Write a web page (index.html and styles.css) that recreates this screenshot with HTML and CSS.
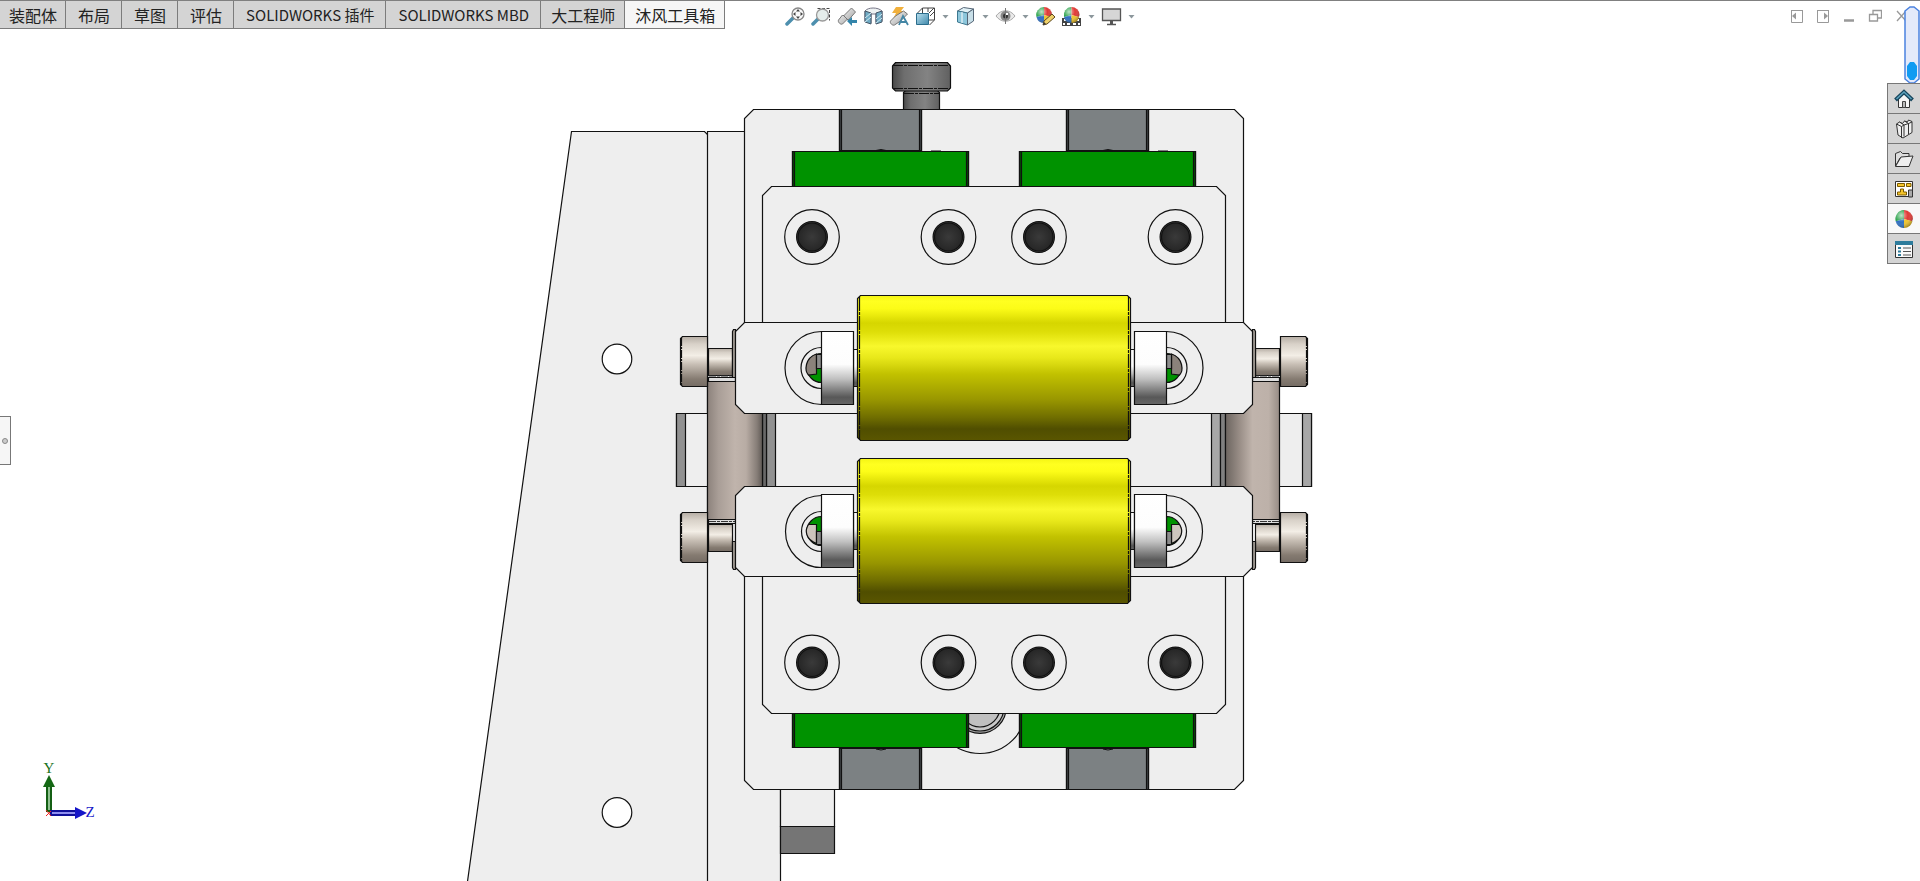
FILE: index.html
```html
<!DOCTYPE html>
<html lang="zh-CN">
<head>
<meta charset="utf-8">
<meta name="viewport" content="width=device-width, initial-scale=1">
<title>沐风工具箱</title>
<link rel="stylesheet" href="styles.css">
</head>
<body>
<main class="viewport">
<svg class="model" viewBox="0 0 1920 881" preserveAspectRatio="xMidYMin slice" role="img" aria-label="装配体">
  <defs>
    <linearGradient id="yellow" x1="0" y1="0" x2="0" y2="1">
      <stop offset="0" stop-color="#f4f414"/><stop offset=".04" stop-color="#ffff20"/><stop offset=".09" stop-color="#fcfc18"/><stop offset=".19" stop-color="#d6d600"/><stop offset=".25" stop-color="#dede08"/><stop offset=".35" stop-color="#f8f82c"/><stop offset=".43" stop-color="#e8e81a"/><stop offset=".54" stop-color="#c2c200"/><stop offset=".72" stop-color="#989600"/><stop offset=".84" stop-color="#706e00"/><stop offset=".92" stop-color="#504e00"/><stop offset="1" stop-color="#5a5600"/>
    </linearGradient>
    <linearGradient id="ring" x1="0" y1="0" x2="0" y2="1">
      <stop offset="0" stop-color="#fff"/><stop offset=".45" stop-color="#fdfdfd"/><stop offset=".65" stop-color="#c0c0c0"/><stop offset=".9" stop-color="#585858"/><stop offset="1" stop-color="#666"/>
    </linearGradient>
    <linearGradient id="steel" x1="0" y1="0" x2="0" y2="1">
      <stop offset="0" stop-color="#b5ada4"/><stop offset=".15" stop-color="#d8d1c8"/><stop offset=".38" stop-color="#f3eee6"/><stop offset=".55" stop-color="#c9c0b6"/><stop offset=".85" stop-color="#857b71"/><stop offset="1" stop-color="#756c64"/>
    </linearGradient>
    <linearGradient id="column">
      <stop offset="0" stop-color="#8c827c"/><stop offset=".2" stop-color="#a99e97"/><stop offset=".5" stop-color="#c0b4ac"/><stop offset=".7" stop-color="#b8aca4"/><stop offset=".9" stop-color="#867d77"/><stop offset="1" stop-color="#5f5955"/>
    </linearGradient>
    <linearGradient id="columnRight">
      <stop offset="0" stop-color="#6c6560"/><stop offset=".25" stop-color="#978c85"/><stop offset=".5" stop-color="#c0b4ac"/><stop offset=".8" stop-color="#bdb1a9"/><stop offset="1" stop-color="#978c85"/>
    </linearGradient>
    <linearGradient id="knob">
      <stop offset="0" stop-color="#4a4a4a"/><stop offset=".2" stop-color="#6e6e6e"/><stop offset=".6" stop-color="#838383"/><stop offset="1" stop-color="#606060"/>
    </linearGradient>
    <radialGradient id="bore"><stop offset="0" stop-color="#3a3a3a"/><stop offset="1" stop-color="#262626"/></radialGradient>
    <g id="hole">
      <circle r="27.3" fill="#eee"/><circle r="15.4" fill="#444"/><circle r="14" fill="url(#bore)"/>
    </g>
    <g id="railTop">
      <path fill="#7c8183" d="M839.5 109.5h82v41h-82z"/><path fill="#404446" d="M839.5 109.5h2v41h-2zM919.5 109.5h2v41h-2z"/>
    </g>
    <g id="block">
      <path fill="#009200" d="M792.5 151.5h176v35h-176z"/><path fill="#005000" d="M792.5 151.5h2v35h-2zM966.5 151.5h2v35h-2z"/>
    </g>
    <g id="screw">
      <path fill="url(#steel)" d="M682.5 336.5h25v50h-25l-2-2v-46z"/>
      <path fill="url(#steel)" d="M708.5 348.5h24v27h-24z"/>
      <path fill="none" stroke-dasharray="8 1 2 1" d="M681.5 338v47"/>
    </g>
    <g id="ringSet">
      <path fill="#eee" d="M853.5 331.5h5v73h-5z" stroke="none"/>
      <path fill="url(#ring)" d="M853.5 349.5h5v37h-5z"/>
      <path fill="url(#ring)" d="M821.5 331.5h32v73h-32z"/>
    </g>
    <g id="slotUpper">
      <path fill="#eee" d="M821.5 331.5a36.5 36.5 0 0 0 0 73"/>
      <path fill="#eee" d="M821.5 347.5a20.5 20.5 0 0 0 0 41"/>
      <path fill="#009200" d="M821.5 353.500a14.500 14.500 0 0 0 0 29z"/>
      <path fill="#8b827b" d="M816.500 354c-12 4-12 17-8 21l8-1z"/>
      <path fill="#8c8c8c" d="M816.500 354.500h5v14h-5z"/>
    </g>
    <g id="slotLower">
      <path fill="#eee" d="M821.5 495.5a36 36 0 0 0 0 72"/>
      <path fill="#eee" d="M821.5 511.500a20 20 0 0 0 0 40"/>
      <path fill="#009200" d="M821.500 516.500a14.500 14.500 0 0 0 0 29z"/>
      <path fill="#cdc5bd" d="M816.500 524.500h-8c-4 6-3 15 8 19z"/>
      <path fill="#8c8c8c" d="M816.500 531.500h5v13h-5z"/>
    </g>
    <g id="side">
      <use href="#screw"/><use href="#screw" y="176"/>
      <path fill="#ddd" d="M708.500 377.500h27v4h-27zM708.500 519.500h27v4h-27z"/>
      <path fill="none" stroke="#333" stroke-dasharray="7 1 3 1" d="M709 376h26M709 521.500h26"/>
      <path fill="#aaa39c" d="M732.500 331.500l1-2h2v48h-3zM732.500 541.500h3v28h-2l-1-2z"/>
    </g>
  </defs>
  <g fill="#eee" stroke="#111" stroke-width="1.200">
    <path d="M571.500 131.500h133l4 4v746h-241z"/>
    <path d="M707.500 131.500h73v750h-73z"/>
    <circle cx="617" cy="359" r="14.800" fill="#fff"/><circle cx="617" cy="812.500" r="14.800" fill="#fff"/>
    <path d="M780.500 780.500h54v46h-54z"/><path fill="#757575" d="M780.500 826.500h54v27h-54z"/>
    <path fill="url(#knob)" d="M903.500 92.500l2-2h32l2 2v17h-36z"/>
    <path fill="url(#knob)" d="M892.500 66l3-3.500h52l3 3.500v22l-3 3h-52l-3-3z"/>
    <path fill="none" stroke-dasharray="10 1 3 1" d="M893 65.500h57M893 88.500h57M904 93.500h35"/>
    <path d="M753.500 109.500h481l9 9v662l-9 9h-481l-9-9v-662z"/>
    <circle cx="980" cy="707" r="46.500"/><circle cx="980" cy="707" r="26.300" fill="#aaa"/><circle cx="980" cy="707" r="24" fill="#c8c8c8"/><circle cx="980" cy="707" r="20" fill="#c0c0c0"/>
    <use href="#railTop"/><use href="#railTop" x="227"/><use href="#railTop" y="639"/><use href="#railTop" x="227" y="639"/>
    <use href="#block"/><use href="#block" x="227"/><use href="#block" y="561"/><use href="#block" x="227" y="561"/>
    <path fill="none" d="M876 150.500l5-1 5 1M1103 150.500l5-1 5 1M931 151h10M1158 151h10M876 749l5 1 5-1M1103 749l5 1 5-1"/>
    <path d="M771.500 186.500h445l9 9v509l-9 9h-445l-9-9v-509z"/>
    <use href="#hole" x="812" y="237"/><use href="#hole" x="948.500" y="237"/><use href="#hole" x="1039" y="237"/><use href="#hole" x="1175.500" y="237"/>
    <use href="#hole" x="812" y="662.500"/><use href="#hole" x="948.500" y="662.500"/><use href="#hole" x="1039" y="662.500"/><use href="#hole" x="1175.500" y="662.500"/>
    <path d="M676.500 413.500h635v73h-635z"/>
    <path fill="#919191" d="M676.500 413.500h9v73h-9zM766.500 413.500h9v73h-9z"/><path fill="#696969" d="M762.500 413.500h4v73h-4z"/>
    <path fill="#a7a7a7" d="M1211.500 413.500h9v73h-9zM1302.500 413.500h9v73h-9z"/><path fill="#808080" d="M1220.500 413.500h5v73h-5z"/>
    <path fill="url(#column)" d="M707.500 381.500h55v138h-55z"/><path fill="url(#columnRight)" d="M1225.500 381.500h54v138h-54z"/>
    <use href="#side"/><use href="#side" transform="translate(1988 0) scale(-1 1)"/>
    <path d="M744.500 322.500h499l9 9v73l-9 9h-499l-9-9v-73z"/>
    <path d="M744.500 486.500h499l9 9v72l-9 9h-499l-9-9v-72z"/>
    <use href="#slotUpper"/><use href="#slotUpper" transform="translate(1988 0) scale(-1 1)"/>
    <use href="#slotLower"/><use href="#slotLower" transform="translate(1988 0) scale(-1 1)"/>
    <use href="#ringSet"/><use href="#ringSet" y="163"/>
    <g transform="translate(1988 0) scale(-1 1)"><use href="#ringSet"/><use href="#ringSet" y="163"/></g>
    <path fill="url(#yellow)" d="M860.500 295.500h267l3 3v139l-3 3h-267l-3-3v-139z"/>
    <path fill="url(#yellow)" d="M860.500 458.500h267l3 3v139l-3 3h-267l-3-3v-139z"/>
    <path fill="none" stroke-dasharray="14 1 3 1" d="M859.500 297v142M1128.500 297v142M859.500 460v142M1128.500 460v142"/>
  </g>
  <g class="axes">
    <path fill="#8fc08f" stroke="#145f14" stroke-width="2" d="M47 786h4v25h-4z"/><path fill="#146814" d="M49 775l6 12H43z"/>
    <path fill="#8f8ff0" stroke="#10109a" stroke-width="2" d="M51 811h25v4H51z"/><path fill="#1616c8" d="M87 813l-12 6v-12z"/>
    <text class="axis-y" x="49" y="773" text-anchor="middle">Y</text>
    <text class="axis-z" x="90" y="817" text-anchor="middle">Z</text>
    <path fill="none" stroke="#e22" d="M46 810l5 6M51 811l-5 5"/>
  </g>
</svg>
</main>

<svg class="symbols" aria-hidden="true">
  <defs>
    <linearGradient id="blue" x2="1" y2="1"><stop stop-color="#b9e0ef"/><stop offset="1" stop-color="#3f88aa"/></linearGradient>
    <linearGradient id="silver" x2="1" y2="1"><stop stop-color="#fff"/><stop offset="1" stop-color="#999"/></linearGradient>
    <radialGradient id="shine" cx=".35" cy=".3" r=".75"><stop stop-color="#fff" stop-opacity=".7"/><stop offset=".5" stop-color="#fff" stop-opacity="0"/><stop offset="1" stop-color="#000" stop-opacity=".35"/></radialGradient>
    <g id="ball">
      <path fill="#2ba34b" d="M9 9V1a8 8 0 0 0-7.500 10z"/><path fill="#e03a35" d="M9 9V1a8 8 0 0 1 8 8l-1 2z"/><path fill="#2f6fc0" d="M1.500 11L9 9v8a8 8 0 0 1-7.500-6z"/><path fill="#f0c42c" d="M9 9l7.500 2A8 8 0 0 1 9 17z"/><circle cx="9" cy="9" r="8" fill="url(#shine)"/>
    </g>
  </defs>
</svg>

<header class="topbar">
  <nav class="tabs">
    <button class="tab tab-edge">装配体</button><button class="tab">布局</button><button class="tab">草图</button><button class="tab">评估</button><button class="tab tab-latin">SOLIDWORKS 插件</button><button class="tab tab-latin">SOLIDWORKS MBD</button><button class="tab tab-snug">大工程师</button><button class="tab tab-snug active">沐风工具箱</button>
  </nav>
  <div class="tools">
    <button class="tool" aria-label="整屏显示全图"><svg viewBox="0 0 21 21"><path d="M2 18l6-6" stroke="#4d8fae" stroke-width="3.500" stroke-linecap="round"/><circle cx="13" cy="8" r="6" fill="#fafafa" stroke="#888" stroke-width="1.300"/><path fill="#444" d="M13 3l2 2.500h-4zM13 13l2-2.500h-4zM8 8l2.500-2v4zM18 8l-2.500-2v4z"/></svg></button>
    <button class="tool" aria-label="局部放大"><svg viewBox="0 0 21 21"><path d="M6.500 2.500h12v12" fill="none" stroke="#444" stroke-dasharray="3 1.500"/><path d="M2 18l5-5" stroke="#4d8fae" stroke-width="3.500" stroke-linecap="round"/><circle cx="11.500" cy="9" r="6" fill="#e5edeb" stroke="#999" stroke-width="1.300"/></svg></button>
    <button class="tool" aria-label="上一视图"><svg viewBox="0 0 21 21"><path fill="url(#silver)" stroke="#777" d="M1.500 14l4-5 1 1 8-8 4 4-7 8-1-1-5 5c-2 1-5-2-4-4z"/><path d="M6 9l5 5" stroke="#777"/><path fill="#3385aa" d="M10 15l5-4v3h5v3h-5v3z"/></svg></button>
    <button class="tool" aria-label="剖面视图"><svg viewBox="0 0 21 21"><path fill="#eef2f3" stroke="#778" d="M2 5c3-4 13-4 17 0v10l-6 1V8H8v9l-6-2z"/><path fill="#6fabc4" stroke="#456" d="M2 5l6 2v11l-6-2zM13 7l6-2v11l-6 2z"/><path d="M2 12l6-5M2 16l6-5M13 13l6-5M13 17l6-5" stroke="#d3eaf3"/></svg></button>
    <button class="tool" aria-label="动态注解视图"><svg viewBox="0 0 21 21"><path fill="#f1b03c" d="M7 1h8l-3 4h4L4 13l3-6H3z"/><path fill="url(#silver)" stroke="#777" d="M1.500 15l5-5 8-5 4 3-7 7-6 4c-2 1-5-2-4-4z"/><path fill="none" stroke="#4386a5" stroke-width="1.800" d="M10 19l4-9 5 9M12 16h5"/></svg></button>
    <button class="tool" aria-label="视图定向"><svg viewBox="0 0 21 21"><path fill="none" stroke="#444" d="M2.500 7l5-5h12v12l-5 5M7.500 2v5M14 7l5-5M14 14h5M13 2v4M15 10l4-4"/><path fill="url(#blue)" stroke="#2b6d8c" d="M1.500 7.500h12v11h-12z"/></svg></button>
    <button class="caret" aria-label="视图定向选项"><svg viewBox="0 0 9 6"><path d="M1.500 1h6l-3 3.500z"/></svg></button>
    <button class="tool" aria-label="显示样式"><svg viewBox="0 0 21 21"><path fill="#e1f1f6" stroke="#567" d="M2.500 5l6-3.500 10 1.500-6 4z"/><path fill="#8dc7dc" stroke="#3c7890" d="M2.500 5l10 2v12l-10-3z"/><path fill="#c8dfe8" stroke="#567" d="M12.500 7l6-4v12l-6 4z"/><path stroke="#fff" d="M7 6v11"/></svg></button>
    <button class="caret" aria-label="显示样式选项"><svg viewBox="0 0 9 6"><path d="M1.500 1h6l-3 3.500z"/></svg></button>
    <button class="tool" aria-label="隐藏或显示项目"><svg viewBox="0 0 21 21"><path fill="#e9e9e9" stroke="#aaa" d="M1 10c5-7 14-7 19 0-5 7-14 7-19 0z"/><circle cx="10.500" cy="10" r="5" fill="#888"/><circle cx="10.500" cy="10" r="2.500" fill="#333"/><path d="M10.500 2v16" stroke="#777"/><path fill="#fff" d="M11 7h2v2h-2z"/></svg></button>
    <button class="caret" aria-label="隐藏选项"><svg viewBox="0 0 9 6"><path d="M1.500 1h6l-3 3.500z"/></svg></button>
    <button class="tool" aria-label="编辑外观"><svg viewBox="0 0 21 21"><use href="#ball"/><path fill="#f0d26a" stroke="#5d4820" d="M8 19l1-4 8-7 3 3-8 7z"/><path fill="#333" d="M8 19l1-3 2 2z"/></svg></button>
    <button class="tool" aria-label="应用布景"><svg viewBox="0 0 21 21"><path fill="#444" d="M1 12h19v8H1z"/><path fill="#fff" d="M3 13h3v2H3zM15 13h3v2h-3zM6 17h3v2H6zM12 17h3v2h-3zM2 17h2v2H2zM17 17h2v2h-2z"/><use href="#ball" x="1.500"/></svg></button>
    <button class="caret" aria-label="布景选项"><svg viewBox="0 0 9 6"><path d="M1.500 1h6l-3 3.500z"/></svg></button>
    <button class="tool" aria-label="视图设定"><svg viewBox="0 0 21 21"><path fill="#d6d6d6" stroke="#555" stroke-width="1.300" d="M1.500 3h18v11.500h-18z"/><path d="M10.500 15v3" stroke="#555" stroke-width="3"/><path d="M6 18.500h9" stroke="#555" stroke-width="1.500"/></svg></button>
    <button class="caret" aria-label="视图设定选项"><svg viewBox="0 0 9 6"><path d="M1.500 1h6l-3 3.500z"/></svg></button>
  </div>
  <div class="window-controls">
    <button class="win" aria-label="向左停靠"><svg viewBox="0 0 14 14"><path d="M1.500 1v12.500h11V1M1.500 1.500h11"/><path fill="#999" stroke="none" d="M6 3.500v7L2 7z"/></svg></button>
    <button class="win" aria-label="向右停靠"><svg viewBox="0 0 14 14"><path d="M1.500 1v12.500h11V1M1.500 1.500h11"/><path fill="#999" stroke="none" d="M8 3.500v7l4-3.500z"/></svg></button>
    <button class="win" aria-label="最小化"><svg viewBox="0 0 14 14"><path d="M2 11.500h10" stroke-width="2.500"/></svg></button>
    <button class="win" aria-label="还原"><svg viewBox="0 0 14 14"><path d="M5 5V1.500h8.500V9H9.500M1.500 5.500h8V12h-8z" stroke-width="1.300"/></svg></button>
    <button class="win" aria-label="关闭"><svg viewBox="0 0 14 14"><path d="M3 2l9 10M12 2L3 12" stroke-width="1.300"/></svg></button>
  </div>
</header>

<button class="flyout" aria-label="展开面板"><span class="flyout-dot"></span></button>

<aside class="side">
  <div class="gauge"><svg viewBox="0 0 16 78"><path fill="#e4eafa" stroke="#4b82df" stroke-width="1.500" d="M1 5l5-4h4l5 4v68l-5 4H6l-5-4z"/><path fill="#109bf2" d="M3 60l3-4h4l3 4v10l-3 4H6l-3-4z"/></svg></div>
  <nav class="panes">
    <button class="pane" aria-label="资源"><svg viewBox="0 0 20 20"><path fill="#f7f7f7" stroke="#333" d="M4.500 9v9.500h11V9L10 4z"/><path fill="#bbb" stroke="#444" d="M8.500 12.500h3v6h-3z"/><path fill="none" stroke="#18465d" stroke-width="4" d="M1.500 11L10 3l8.500 8"/><path fill="none" stroke="#5ba2bd" stroke-width="1.500" d="M2.500 10L10 3l7.500 7"/></svg></button>
    <button class="pane" aria-label="设计库"><svg viewBox="0 0 20 20"><path fill="#eee" stroke="#333" d="M2.500 5l3-2 3 1.500 2-2.500 3 1 1-2 3.500 1.500v11l-9 5.500-5-3zM2.500 5l5 2.500V19M5.500 3l4.500 3v11.500M10 6l-2.500 1.500M10.500 2l4 2.500v10.500M14.500 4.500L10 6M18 3l-3.500 1.500"/></svg></button>
    <button class="pane" aria-label="文件探索器"><svg viewBox="0 0 20 20"><path fill="#ddd" stroke="#333" d="M1.500 17V4.500l5-2 2 2H15V8l-9 1z"/><path fill="#eee" stroke="#333" d="M1.500 17.500L7 8l12-1-4 10.500z"/></svg></button>
    <button class="pane" aria-label="视图调色板"><svg viewBox="0 0 20 20"><path fill="#fff" stroke="#333" d="M1.500 2.500h17v15h-17z"/><path fill="#f5c52b" stroke="#7b5b00" d="M3.500 4.500h7v3h-7zM12.500 4.500H17v3h-4.500zM3.500 13h3v-3h3v3h3v3h-9z"/><path fill="#aaa" stroke="#333" d="M14.500 11h4v7h-4z"/></svg></button>
    <button class="pane active" aria-label="外观"><svg viewBox="0 0 18 18"><use href="#ball"/></svg></button>
    <button class="pane" aria-label="自定义属性"><svg viewBox="0 0 20 20"><path fill="#fafafa" stroke="#333" d="M1.500 2.500h17v16h-17z"/><path fill="#2e7c9c" d="M1 2h18v4H1z"/><path d="M9 9h8M9 12.500h8M9 16h8" stroke="#555"/><path fill="#2e7c9c" d="M4 8h3v2H4zM4 11.500h3v2H4zM4 15h3v2H4z"/></svg></button>
  </nav>
</aside>
</body>
</html>
```
FILE: styles.css
```css
* { box-sizing: border-box; }

body {
  margin: 0;
  min-height: 100vh;
  display: grid;
  grid-template: minmax(0, 1fr) / minmax(0, 1fr);
  overflow: hidden;
  background: #fff;
  font-family: "Noto Sans CJK SC", sans-serif;
}

/* The model fills the page; every bar shares its grid cell and lies over it. */
.viewport, .topbar, .flyout, .side { grid-area: 1 / 1; }

.viewport { height: 100vh; }
.model { display: block; width: 100%; height: 100%; }
.symbols { position: absolute; width: 0; height: 0; }

.axes { font: 15px "Liberation Serif", serif; }
.axis-y { fill: #187018; }
.axis-z { fill: #1616c8; }

button {
  margin: 0;
  padding: 0;
  border: 0;
  background: none;
  font: inherit;
  color: inherit;
}

.topbar {
  align-self: start;
  display: grid;
  grid-template-columns: 1fr auto 1fr;
  align-items: start;
  border-top: 1px solid #808080;
}

.tabs {
  display: flex;
  justify-self: start;
  white-space: nowrap;
}

.tab {
  height: 28px;
  padding: 0 12px;
  background: #d4d4d4;
  box-shadow: inset -1px -1px #7c7c7c;
  color: #222;
  font-size: 16px;
  line-height: 26px;
}
.tab-edge { padding: 0 9px; }
.tab-snug { padding: 0 10px; }
.tab-latin { font-size: 15px; }
.tab.active { background: #f6f6f6; }

.tools {
  display: flex;
  align-items: center;
  gap: 5px;
  padding-top: 5px;
}
.tool { width: 21px; height: 21px; }
.tool svg, .caret svg, .win svg, .pane svg, .gauge svg { display: block; width: 100%; }
.caret { width: 9px; fill: #8c979c; }

.window-controls {
  display: flex;
  justify-self: end;
  gap: 12px;
  padding: 8px 12px 0 0;
}
.win { width: 14px; height: 14px; }
.win svg { fill: none; stroke: #999; }

.flyout {
  align-self: center;
  justify-self: start;
  display: flex;
  align-items: center;
  justify-content: center;
  width: 11px;
  height: 49px;
  border: 1px solid #777;
  border-left: 0;
  background: #f6f6f6;
}
.flyout-dot {
  width: 6px;
  height: 6px;
  border: 1px solid #888;
  border-radius: 50%;
  background: #ccc;
}

.side {
  align-self: start;
  justify-self: end;
  display: flex;
  flex-direction: column;
  align-items: flex-end;
  padding-top: 6px;
}
.gauge { width: 16px; }
.panes {
  display: flex;
  flex-direction: column;
  width: 33px;
  border-left: 1px solid #777;
  box-shadow: 0 -1px #777;
}
.pane {
  display: flex;
  align-items: center;
  justify-content: center;
  height: 30px;
  padding: 0 6px;
  border-bottom: 1px solid #777;
  background: #d4d4d4;
}
.pane.active { background: #f8f8f8; }
```
